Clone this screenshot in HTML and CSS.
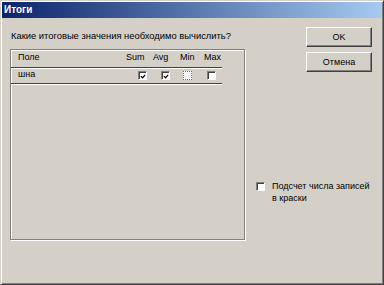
FILE: index.html
```html
<!DOCTYPE html>
<html lang="ru">
<head>
<meta charset="utf-8">
<title>Итоги</title>
<link rel="stylesheet" href="styles.css">
</head>
<body>
<div class="window">
  <div class="titlebar"><span class="title">Итоги</span></div>
  <div class="content">
    <div class="left">
      <p class="prompt">Какие итоговые значения необходимо вычислить?</p>
      <div class="fields">
        <div class="row head">
          <span class="name">Поле</span>
          <span class="cell c-sum">Sum</span>
          <span class="cell c-avg">Avg</span>
          <span class="cell c-min">Min</span>
          <span class="cell c-max">Max</span>
        </div>
        <div class="row">
          <span class="name">шна</span>
          <span class="cell c-sum"><span class="cb"><svg viewBox="0 0 7 7" width="7" height="7"><polyline points="1,3 3,5 6,1.5" fill="none" stroke="#000" stroke-width="1.4"/></svg></span></span>
          <span class="cell c-avg"><span class="cb"><svg viewBox="0 0 7 7" width="7" height="7"><polyline points="1,3 3,5 6,1.5" fill="none" stroke="#000" stroke-width="1.4"/></svg></span></span>
          <span class="cell c-min"><span class="cb cb-dotted"></span></span>
          <span class="cell c-max"><span class="cb"></span></span>
        </div>
      </div>
    </div>
    <div class="right">
      <button class="btn">OK</button>
      <button class="btn">Отмена</button>
      <label class="check"><span class="cb"></span><span class="check-text">Подсчет числа записей в краски</span></label>
    </div>
  </div>
</div>
</body>
</html>
```
FILE: styles.css
```css
* { box-sizing: border-box; }
html, body { margin: 0; padding: 0; }
body {
  width: 384px;
  height: 285px;
  overflow: hidden;
  background: #d4d0c8;
  font-family: "Liberation Sans", Arial, sans-serif;
  font-size: 9px;
  color: #000;
}
.window {
  width: 384px;
  height: 285px;
  background: #d4d0c8;
  border: 1px solid;
  border-color: #d4d0c8 #404040 #404040 #d4d0c8;
  box-shadow: inset 1px 1px 0 #fff, inset -1px -1px 0 #808080;
  padding: 1px;
}
.titlebar {
  height: 16px;
  background: linear-gradient(to right, #0a246a, #a6caf0);
  display: flex;
  align-items: center;
  padding-left: 2px;
}
.title {
  color: #fff;
  font-weight: bold;
  font-size: 10px;
  line-height: 12px;
}
.content {
  display: grid;
  grid-template-columns: 236px 116px;
  column-gap: 10px;
  padding: 9px 0 0 8px;
}
.prompt {
  margin: 3px 0 8px 1px;
  font-size: 9.4px;
  line-height: 11px;
}
.fields {
  width: 235px;
  height: 191px;
  border: 1px solid #808080;
  box-shadow: 1px 1px 0 #fff, inset 1px 1px 0 #fff;
}
.row {
  display: grid;
  grid-template-columns: 115px 27px 27px 24px 18px;
  width: 211px;
  height: 16px;
  line-height: 11px;
  padding-top: 1px;
  border-bottom: 1px solid #404040;
  box-shadow: 0 1px 0 #fff;
}
.row.head {
  height: 18px;
  padding-top: 2px;
}
.name { padding-left: 7px; }
.row:not(.head) .c-sum .cb { margin-left: 12px; }
.row:not(.head) .c-avg .cb { margin-left: 8px; }
.row:not(.head) .c-min .cb { margin-left: 3px; }
.row:not(.head) .c-max .cb { margin-left: 3px; }
.cell { display: block; }
.cb {
  display: flex;
  align-items: center;
  justify-content: center;
  width: 9px;
  height: 9px;
  margin-top: 2px;
  background: #fff;
  border: 1px solid;
  border-color: #808080 #fff #fff #808080;
  box-shadow: inset 1px 1px 0 #404040;
}
.cb svg { margin: 1px 0 0 1px; }
.cb-dotted {
  border: 1px dotted #707070;
  box-shadow: none;
  background: #f4f4f4;
}
.right {
  display: flex;
  flex-direction: column;
  align-items: flex-end;
}
.btn {
  width: 66px;
  height: 20px;
  margin: 0 0 5px 0;
  padding: 0;
  background: #d4d0c8;
  font-family: "Liberation Sans", Arial, sans-serif;
  font-size: 9px;
  color: #000;
  border: 1px solid;
  border-color: #fff #404040 #404040 #fff;
  box-shadow: inset -1px -1px 0 #808080;
}
.check {
  align-self: stretch;
  display: flex;
  align-items: flex-start;
  gap: 7px;
  margin-top: 103px;
  line-height: 12px;
}
.check .cb { flex: none; margin-top: 2px; }
.check-text { width: 100px; }
```
